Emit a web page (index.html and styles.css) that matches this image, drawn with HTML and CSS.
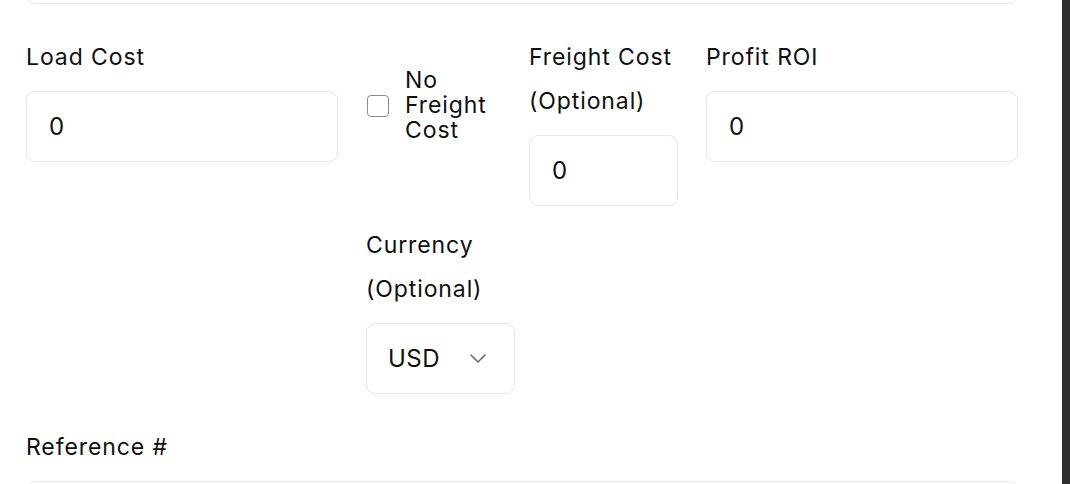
FILE: index.html
```html
<!DOCTYPE html>
<html lang="en">
<head>
<meta charset="utf-8">
<title>Load form</title>
<link rel="stylesheet" href="styles.css">
</head>
<body>
<main class="content">
  <form class="form">
    <input class="input input-top" type="text" value="">
    <div class="row">
      <div class="field field-grow">
        <label class="label">Load Cost</label>
        <input class="input" type="text" value="0">
      </div>
      <div class="mid">
        <label class="check">
          <input class="checkbox" type="checkbox">
          <span class="check-text">No<br>Freight<br>Cost</span>
        </label>
        <div class="field field-narrow">
          <label class="label">Freight Cost<br>(Optional)</label>
          <input class="input" type="text" value="0">
        </div>
        <div class="field field-narrow">
          <label class="label">Currency<br>(Optional)</label>
          <div class="select">
            <span class="select-value">USD</span>
            <svg class="chevron" width="16" height="9" viewBox="0 0 16 9" fill="none">
              <path d="M1 1l7 7 7-7" stroke="#6b6b6b" stroke-width="1.6" stroke-linecap="round" stroke-linejoin="round"/>
            </svg>
          </div>
        </div>
      </div>
      <div class="field field-grow">
        <label class="label">Profit ROI</label>
        <input class="input" type="text" value="0">
      </div>
    </div>
    <div class="field">
      <label class="label">Reference #</label>
      <input class="input" type="text" value="">
    </div>
  </form>
</main>
<aside class="sidebar"></aside>
</body>
</html>
```
FILE: styles.css
```css
* { box-sizing: border-box; }
html, body { height: 100%; }
body {
  margin: 0;
  display: flex;
  background: #ffffff;
  font-family: Inter, "Noto Sans", "Liberation Sans", sans-serif;
  color: #0f0f0f;
  overflow: hidden;
}
.content {
  flex: 1;
  padding: 0 44px 0 26px;
}
.sidebar {
  width: 8px;
  flex: none;
  background: #2f2f2f;
}
.form {
  display: flex;
  flex-direction: column;
  gap: 31px;
  margin-top: -67px;
}
.row {
  display: flex;
  gap: 28px;
  align-items: flex-start;
}
.field {
  display: flex;
  flex-direction: column;
}
.field-grow { flex: 1; min-width: 0; }
.field-narrow { width: 149px; }
.mid {
  width: 312px;
  flex: none;
  display: flex;
  flex-wrap: wrap;
  align-items: flex-start;
  column-gap: 28px;
  row-gap: 17px;
}
.label {
  font-size: 23px;
  line-height: 44px;
  font-weight: 400;
  letter-spacing: 0.9px;
  color: #0f0f0f;
  margin-bottom: 12px;
}
.input {
  height: 71px;
  width: 100%;
  border: 1px solid #e6e6e6;
  border-radius: 9px;
  padding: 0 20px 0 22px;
  font-family: inherit;
  font-size: 24px;
  color: #0f0f0f;
  background: #fff;
  outline: none;
}
.check {
  width: 135px;
  margin-top: 33px;
  display: flex;
  align-items: center;
  gap: 16px;
}
.checkbox {
  appearance: none;
  -webkit-appearance: none;
  margin: 0 0 0 1px;
  width: 22px;
  height: 22px;
  flex: none;
  border: 1.5px solid #8a8a8a;
  border-radius: 4px;
  background: #fff;
}
.check-text {
  font-size: 23px;
  line-height: 25px;
  font-weight: 400;
  letter-spacing: 0.9px;
  color: #0f0f0f;
}
.select {
  height: 71px;
  border: 1px solid #e6e6e6;
  border-radius: 9px;
  padding: 0 28px 0 21px;
  display: flex;
  align-items: center;
  justify-content: space-between;
  font-size: 24px;
}
.select-value { color: #0f0f0f; letter-spacing: 0.5px; }
.chevron { display: block; }
```
